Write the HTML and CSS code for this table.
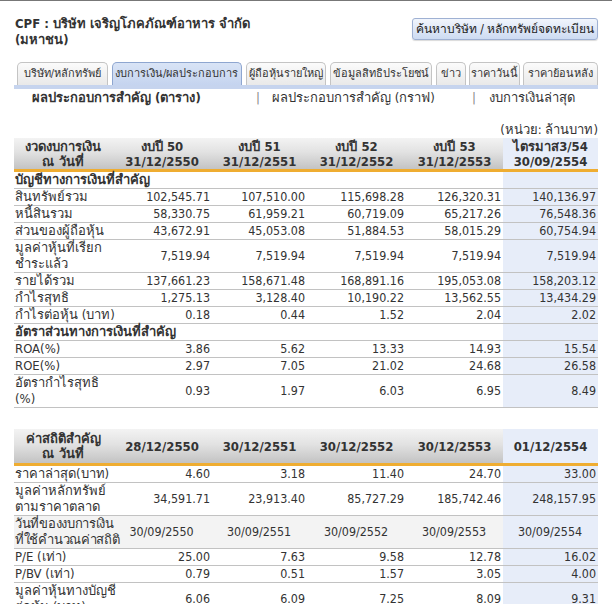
FILE: index.html
```html
<!DOCTYPE html>
<html lang="th">
<head>
<meta charset="utf-8">
<title>CPF</title>
<link rel="stylesheet" href="styles.css">
</head>
<body>
<div class="page">
  <div class="top">
    <div class="title">CPF : บริษัท เจริญโภคภัณฑ์อาหาร จำกัด<br>(มหาชน)</div>
    <div class="btn">ค้นหาบริษัท / หลักทรัพย์จดทะเบียน</div>
  </div>
  <div class="tabs">
    <div class="tab t1">บริษัท/หลักทรัพย์</div>
    <div class="tab t2 active">งบการเงิน/ผลประกอบการ</div>
    <div class="tab t3">ผู้ถือหุ้นรายใหญ่</div>
    <div class="tab t4">ข้อมูลสิทธิประโยชน์</div>
    <div class="tab t5">ข่าว</div>
    <div class="tab t6">ราคาวันนี้</div>
    <div class="tab t7">ราคาย้อนหลัง</div>
  </div>
  <div class="bar"></div>
  <div class="subnav">
    <div class="sn1">ผลประกอบการสำคัญ (ตาราง)</div>
    <div class="sep">|</div>
    <div class="sn2">ผลประกอบการสำคัญ (กราฟ)</div>
    <div class="sep">|</div>
    <div class="sn3">งบการเงินล่าสุด</div>
  </div>
  <div class="unit">(หน่วย: ล้านบาท)</div>
  <table class="data">
    <colgroup><col class="c0"><col class="c1"><col class="c2"><col class="c3"><col class="c4"><col class="c5"></colgroup>
    <thead>
      <tr class="h1"><th>งวดงบการเงิน<br>ณ วันที่</th><th>งบปี 50<br>31/12/2550</th><th>งบปี 51<br>31/12/2551</th><th>งบปี 52<br>31/12/2552</th><th>งบปี 53<br>31/12/2553</th><th class="q">ไตรมาส3/54<br>30/09/2554</th></tr>
    </thead>
    <tbody>
      <tr class="sec"><td colspan="5">บัญชีทางการเงินที่สำคัญ</td><td class="q"></td></tr>
      <tr><td>สินทรัพย์รวม</td><td>102,545.71</td><td>107,510.00</td><td>115,698.28</td><td>126,320.31</td><td class="q">140,136.97</td></tr>
      <tr><td>หนี้สินรวม</td><td>58,330.75</td><td>61,959.21</td><td>60,719.09</td><td>65,217.26</td><td class="q">76,548.36</td></tr>
      <tr><td>ส่วนของผู้ถือหุ้น</td><td>43,672.91</td><td>45,053.08</td><td>51,884.53</td><td>58,015.29</td><td class="q">60,754.94</td></tr>
      <tr><td>มูลค่าหุ้นที่เรียก<br>ชำระแล้ว</td><td>7,519.94</td><td>7,519.94</td><td>7,519.94</td><td>7,519.94</td><td class="q">7,519.94</td></tr>
      <tr><td>รายได้รวม</td><td>137,661.23</td><td>158,671.48</td><td>168,891.16</td><td>195,053.08</td><td class="q">158,203.12</td></tr>
      <tr><td>กำไรสุทธิ</td><td>1,275.13</td><td>3,128.40</td><td>10,190.22</td><td>13,562.55</td><td class="q">13,434.29</td></tr>
      <tr><td>กำไรต่อหุ้น (บาท)</td><td>0.18</td><td>0.44</td><td>1.52</td><td>2.04</td><td class="q">2.02</td></tr>
      <tr class="sec"><td colspan="5">อัตราส่วนทางการเงินที่สำคัญ</td><td class="q"></td></tr>
      <tr><td>ROA(%)</td><td>3.86</td><td>5.62</td><td>13.33</td><td>14.93</td><td class="q">15.54</td></tr>
      <tr><td>ROE(%)</td><td>2.97</td><td>7.05</td><td>21.02</td><td>24.68</td><td class="q">26.58</td></tr>
      <tr><td>อัตรากำไรสุทธิ<br>(%)</td><td>0.93</td><td>1.97</td><td>6.03</td><td>6.95</td><td class="q">8.49</td></tr>
    </tbody>
  </table>
  <table class="data stats">
    <colgroup><col class="c0"><col class="c1"><col class="c2"><col class="c3"><col class="c4"><col class="c5"></colgroup>
    <thead>
      <tr class="h2"><th>ค่าสถิติสำคัญ<br>ณ วันที่</th><th>28/12/2550</th><th>30/12/2551</th><th>30/12/2552</th><th>30/12/2553</th><th class="q">01/12/2554</th></tr>
    </thead>
    <tbody>
      <tr><td>ราคาล่าสุด(บาท)</td><td>4.60</td><td>3.18</td><td>11.40</td><td>24.70</td><td class="q">33.00</td></tr>
      <tr><td>มูลค่าหลักทรัพย์<br>ตามราคาตลาด</td><td>34,591.71</td><td>23,913.40</td><td>85,727.29</td><td>185,742.46</td><td class="q">248,157.95</td></tr>
      <tr class="dates"><td class="tight">วันที่ของงบการเงิน<br>ที่ใช้คำนวณค่าสถิติ</td><td>30/09/2550</td><td>30/09/2551</td><td>30/09/2552</td><td>30/09/2553</td><td class="q">30/09/2554</td></tr>
      <tr><td>P/E (เท่า)</td><td>25.00</td><td>7.63</td><td>9.58</td><td>12.78</td><td class="q">16.02</td></tr>
      <tr><td>P/BV (เท่า)</td><td>0.79</td><td>0.51</td><td>1.57</td><td>3.05</td><td class="q">4.00</td></tr>
      <tr><td>มูลค่าหุ้นทางบัญชี<br>ต่อหุ้น (บาท)</td><td>6.06</td><td>6.09</td><td>7.25</td><td>8.09</td><td class="q">9.31</td></tr>
    </tbody>
  </table>
</div>
</body>
</html>
```

FILE: styles.css
```css
html { overflow: hidden; }
body {
  margin: 0;
  border-top: 1px solid #777;
  font-family: "DejaVu Sans Condensed", "DejaVu Sans", sans-serif;
  font-stretch: condensed;
  font-size: 13px;
  color: #333;
  background: #fff;
}
.page { width: 584px; padding: 0 14px; }

.top { display: flex; justify-content: space-between; align-items: flex-start; height: 47px; }
.title { font-weight: bold; line-height: 16px; padding: 15px 0 0 1px; }
.btn {
  margin-top: 17px;
  width: 184px; height: 20px; line-height: 20px;
  border: 1px solid #9fb1d3; border-radius: 3px;
  background: linear-gradient(#f1f5fc, #cddbf2);
  box-shadow: 0 1px 1px rgba(0,0,0,0.15);
  text-align: center; font-size: 12px; color: #222;
}

.tabs { display: flex; gap: 4px; margin-top: 14px; padding-left: 3px; height: 23px; }
.tab {
  box-sizing: border-box; height: 23px; line-height: 21px;
  border: 1px solid #c4c4c4; border-bottom: none; border-radius: 5px 5px 0 0;
  background: linear-gradient(#fbfbfb, #e9e9e9);
  text-align: center; font-size: 11px; color: #333; white-space: nowrap;
}
.tab.active { background: linear-gradient(#d9e4f6, #c5d4ef); border-color: #8ea6d0; }
.t1 { width: 91px; } .t2 { width: 130px; } .t3 { width: 81px; } .t4 { width: 102px; }
.t5 { width: 30px; margin-right: -1px; } .t6 { width: 51px; margin-right: -1px; } .t7 { width: 75px; }
.bar { height: 4px; background: #c6d4ee; }

.subnav { display: flex; height: 18px; line-height: 18px; }
.sn1 { width: 224px; padding-left: 18px; font-weight: bold; }
.sep { width: 16px; color: #888; }
.sn2 { width: 200px; }
.sn3 { padding-left: 1px; }

.unit { text-align: right; margin-top: 14px; height: 17px; line-height: 17px; }

table.data { width: 584px; border-collapse: collapse; table-layout: fixed; }
.c0 { width: 98px; } .c1 { width: 100px; } .c2 { width: 95px; } .c3 { width: 99px; } .c4 { width: 97px; } .c5 { width: 95px; }
.data th {
  background: linear-gradient(#f3f3f3, #e2e2e2 45%, #c3c3c3);
  font-weight: bold; text-align: center; line-height: 15px; padding: 0;
  border-bottom: 3px solid #efad31; vertical-align: middle;
}
.h1 th { height: 31px; }
.h2 th { height: 34px; }
.data th.q { background: #e7edf9; }
.data td {
  line-height: 16px; padding: 0 2px 0 1px; text-align: right;
  border-bottom: 1px solid #c2c2c2; white-space: nowrap; vertical-align: middle;
  font-size: 12.4px;
}
.data td:first-child { text-align: left; font-size: 13px; }
.data td.q { background: #e7edf9; }
.data tr.sec td { font-weight: bold; text-align: left; font-size: 13px; }
.stats { margin-top: 21px; }
.dates td { background: #f3f3f3; text-align: center; }
.dates td:first-child { text-align: left; }
.data td.tight { letter-spacing: -0.3px; }
```
